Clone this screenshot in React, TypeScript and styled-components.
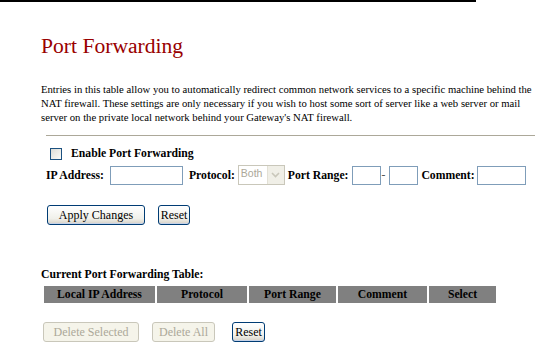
import React from "react";
import styled, { createGlobalStyle } from "styled-components";

const Global = createGlobalStyle`
  html, body { margin: 0; padding: 0; background: #fff; }
  body { font-family: "Liberation Serif", "Times New Roman", serif; color: #000; }
`;

const Page = styled.div`
  width: 540px;
  height: 353px;
  overflow: hidden;
`;

const TopRule = styled.div`
  width: 476px;
  height: 2px;
  background: #000;
`;

const Content = styled.div`
  padding-left: 41px;
  display: flex;
  flex-direction: column;
`;

const Title = styled.h1`
  margin: 31px 0 0 0;
  font-size: 21.6px;
  font-weight: normal;
  line-height: 26px;
  color: #990000;
`;

const Intro = styled.p`
  margin: 23px 0 0 0;
  font-size: 10.7px;
  line-height: 14px;
  white-space: nowrap;
`;

const Divider = styled.div`
  margin: 11px 0 0 5px;
  width: 489px;
  height: 1px;
  background: #aca899;
`;

const Row = styled.div<{ $top: number }>`
  display: flex;
  align-items: center;
  margin-top: ${(p) => p.$top}px;
  padding-left: 5px;
  font-size: 11.7px;
  font-weight: bold;
`;

const Check = styled.span`
  box-sizing: border-box;
  width: 12px;
  height: 12px;
  margin: 0 9px 0 4px;
  border: 1px solid #1c5180;
  background: linear-gradient(135deg, #dcdcd7, #fbfbf8);
`;

const Label = styled.span<{ $gap?: number }>`
  margin-left: ${(p) => p.$gap ?? 0}px;
  white-space: nowrap;
`;

const TextBox = styled.span<{ $w: number; $ml?: number }>`
  box-sizing: border-box;
  display: inline-block;
  width: ${(p) => p.$w}px;
  height: 19px;
  border: 1px solid #7f9db9;
  background: #fff;
  margin-left: ${(p) => p.$ml ?? 3}px;
`;

const Dash = styled.span`
  font-weight: normal;
  margin: 0 1px 0 1px;
  color: #555;
`;

const FakeSelect = styled.span`
  box-sizing: border-box;
  display: inline-flex;
  align-items: stretch;
  width: 47px;
  height: 20px;
  margin: 0 3px 0 3px;
  border: 1px solid #c9c7ba;
  background: #fff;
`;

const SelectText = styled.span`
  flex: 1;
  font-family: "Liberation Sans", Arial, sans-serif;
  font-weight: normal;
  font-size: 10.5px;
  color: #aca899;
  padding: 1px 0 0 2px;
`;

const SelectArrow = styled.span`
  width: 16px;
  display: flex;
  align-items: center;
  justify-content: center;
  background: #f0efe7;
  border-left: 1px solid #e3e1d6;
`;

const ButtonRow = styled.div<{ $top: number }>`
  display: flex;
  align-items: center;
  margin-top: ${(p) => p.$top}px;
`;

const Button = styled.span<{ $w: number; $ml: number; $disabled?: boolean }>`
  box-sizing: border-box;
  display: inline-flex;
  align-items: center;
  justify-content: center;
  width: ${(p) => p.$w}px;
  height: 20px;
  margin-left: ${(p) => p.$ml}px;
  border-radius: 3px;
  font-size: 12px;
  font-family: "Liberation Serif", serif;
  border: 1px solid ${(p) => (p.$disabled ? "#c9c7ba" : "#003c74")};
  color: ${(p) => (p.$disabled ? "#aca899" : "#000")};
  background: ${(p) =>
    p.$disabled
      ? "#f5f4ea"
      : "linear-gradient(#ffffff, #f0f0ea 70%, #d6d0c5)"};
  box-shadow: ${(p) => (p.$disabled ? "none" : "inset 0 -1px 0 #c5d2e8")};
`;

const TableTitle = styled.div`
  margin-top: 43px;
  font-size: 11.7px;
  font-weight: bold;
  line-height: 14px;
`;

const Table = styled.div`
  display: grid;
  grid-template-columns: 111px 90px 87px 89px 67px;
  column-gap: 2px;
  margin: 4px 0 0 3px;
  width: fit-content;
`;

const HeadCell = styled.div`
  background: #808080;
  height: 17px;
  display: flex;
  align-items: center;
  justify-content: center;
  font-size: 11.7px;
  font-weight: bold;
`;

function Arrow() {
  return (
    <svg width="9" height="6" viewBox="0 0 9 6">
      <path d="M1 1 L4.5 4.5 L8 1" fill="none" stroke="#c9c7ba" strokeWidth="1.6" />
    </svg>
  );
}

export default function App() {
  return (
    <Page>
      <Global />
      <TopRule />
      <Content>
        <Title>Port Forwarding</Title>
        <Intro>
          Entries in this table allow you to automatically redirect common network services to a specific machine behind the
          <br />
          NAT firewall. These settings are only necessary if you wish to host some sort of server like a web server or mail
          <br />
          server on the private local network behind your Gateway's NAT firewall.
        </Intro>
        <Divider />
        <Row $top={11}>
          <Check />
          <Label>Enable Port Forwarding</Label>
        </Row>
        <Row $top={5}>
          <Label>IP Address:</Label>
          <TextBox $w={73} $ml={6} />
          <Label $gap={6}>Protocol:</Label>
          <FakeSelect>
            <SelectText>Both</SelectText>
            <SelectArrow>
              <Arrow />
            </SelectArrow>
          </FakeSelect>
          <Label>Port Range:</Label>
          <TextBox $w={29} />
          <Dash>-</Dash>
          <TextBox $w={29} />
          <Label $gap={3}>Comment:</Label>
          <TextBox $w={49} $ml={2} />
        </Row>
        <ButtonRow $top={20}>
          <Button $w={98} $ml={6}>Apply Changes</Button>
          <Button $w={32} $ml={13}>Reset</Button>
        </ButtonRow>
        <TableTitle>Current Port Forwarding Table:</TableTitle>
        <Table>
          <HeadCell>Local IP Address</HeadCell>
          <HeadCell>Protocol</HeadCell>
          <HeadCell>Port Range</HeadCell>
          <HeadCell>Comment</HeadCell>
          <HeadCell>Select</HeadCell>
        </Table>
        <ButtonRow $top={19}>
          <Button $w={96} $ml={2} $disabled>Delete Selected</Button>
          <Button $w={63} $ml={13} $disabled>Delete All</Button>
          <Button $w={33} $ml={17}>Reset</Button>
        </ButtonRow>
      </Content>
    </Page>
  );
}
